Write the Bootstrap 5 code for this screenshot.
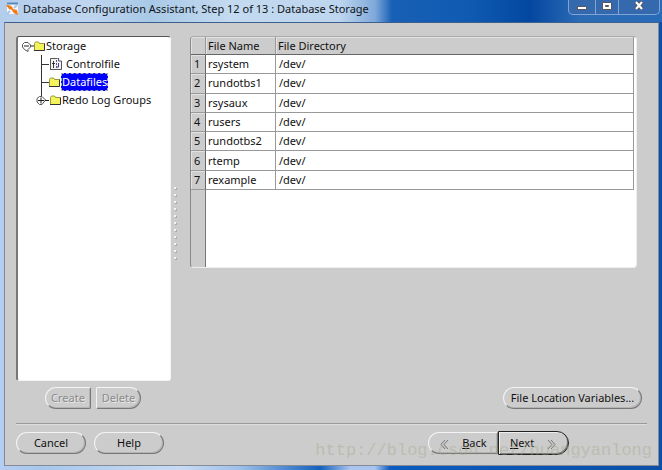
<!DOCTYPE html>
<html lang="en">
<head>
<meta charset="utf-8">
<meta name="viewport" content="width=device-width, initial-scale=1">
<title>Database Configuration Assistant</title>
<link href="https://cdn.jsdelivr.net/npm/bootstrap@5.3.0/dist/css/bootstrap.min.css" rel="stylesheet">
<style>
body{font:11px/14px "Noto Sans","Open Sans",sans-serif;color:#111;background:#1259ae}
.win{padding:0 3px 4px 4px;background:linear-gradient(90deg,#b5cdf2 0,#a6c8ec 40px,#c9dbf3 180px,#9dc0ea 240px,#1560bd 320px,#a9c4ee 350px,#a9c4ee 375px,#0b5cc0 390px,#0b4fa8 100%)}
.titlebar{height:22px;margin:0 -3px 0 -4px;padding-left:6px;background:linear-gradient(90deg,#b3cdec 0,#bfd5ef 90px,#a8c9e6 150px,#c3daf0 230px,#bdd5ee 340px,#7fa9da 375px,#1760b5 392px,#105ab2 470px,#0347a0 530px,#2c6bb5 580px,#286bb8 100%)}
.titlebar h1{font:11px/18px "Noto Sans","Open Sans",sans-serif;color:#101418;margin:0}
.capbtns{height:15px;border:1px solid #7fa5d6;border-top:0;border-radius:0 0 5px 5px;margin-right:2px;background:#3469ad}
.capbtns button{border:0;background:none;padding:0 0 4px;width:26px;line-height:0}
.capbtns button+button{border-left:1px solid #7fa5d6;width:23px}
.capbtns button:last-child{width:41px}
.client{background:#ccc;border:1px solid #848b96;border-top-color:#3d5f8d;padding:13px 11px 0}
.tree{width:155px;height:345px;background:#fff;border:1px solid #f4f4f4;border-top-color:#555;border-left:2px solid #777;border-radius:3px}
.tree ul{margin:0;padding:0}
.tree li{min-height:18px;position:relative}
.kids{padding-left:23px!important}
.kids::before{content:"";position:absolute;left:23px;top:0;height:46px;border-left:1px solid #333}
.kids li::before{content:"";width:8px;border-top:1px solid #333;flex:none}
.kids li.branch{margin-left:-5px}
.kids li.branch::before{display:none}
.picked{background:#00f;color:#fff;outline:1px dashed #aab;outline-offset:-1px;height:18px;line-height:17px;padding:0 1px}
.grip{width:19px;padding:151px 0 0 3px}
.grip i{display:block;width:2px;height:2px;background:#f4f4f4;box-shadow:1px 1px 0 #aaa;margin-bottom:5px}
.sheet{height:232px;border:1px solid #eee;border-top-color:#aaa;border-left-color:#888;border-radius:4px;margin-right:10px;background:linear-gradient(90deg,#ccc 14px,#777 14px,#777 15px,#fff 15px);overflow:hidden;padding-right:2px}
.grid{width:100%;height:153px;table-layout:fixed;border-collapse:separate;border-spacing:0}
.grid th,.grid td{border-right:1px solid #999;border-bottom:1px solid #999;padding:0 2px;font-weight:400;background:#fff;vertical-align:middle}
.grid th{background:#ccc;box-shadow:inset 1px 1px 0 #e2e2e2}
.grid thead th{border-bottom-color:#666;height:18px}
.grid tbody th{border-right-color:#666;padding-left:3px}
.grid td+td{padding-left:3px}
.pill{font:inherit;color:#111;background:#ccc;border:1px solid #f3f3f3;border-right-color:#777;border-bottom-color:#777;box-shadow:inset -1px -1px 0 #b4b4b4;border-radius:12px;height:22px;padding:0;width:70px;line-height:18px}
.pill:disabled{color:#8b8b8b;text-shadow:1px 1px 0 #e8e8e8;opacity:1}
.create,.delete{width:46px}
.delete{width:45px}
.create{border-radius:11px 2px 2px 11px}
.delete{border-radius:2px 11px 11px 2px}
.vars{width:139px}
.back{border-radius:12px 0 0 12px}
.next{width:71px;border:1px solid #222;border-radius:0 12px 12px 0;height:24px;box-shadow:inset 1px 1px 0 #eee,inset -1px -1px 0 #777}
.pairs{gap:5px;margin-left:29px}
.actions{padding:6px 5px 14px 0}
.foot{border-top:1px solid #999;box-shadow:inset 0 1px 0 #ddd;padding-top:8px}
.nav-pair{margin:-1px 78px 0 0}
.stamp{position:absolute;right:10px;bottom:9px;font:17px/20px "Liberation Mono",monospace;color:#a5a58a;opacity:.4;pointer-events:none}
</style>
<script src="https://cdn.jsdelivr.net/npm/bootstrap@5.3.0/dist/js/bootstrap.bundle.min.js"></script>
</head>
<body>
<svg width="0" height="0" class="position-absolute" aria-hidden="true">
<symbol id="folder" viewBox="0 0 13 11"><path d="M1.500 2.500 3 1h3l1 1h4.500v7.500h-10z" fill="#f3f35c"/><path d="M1.500 9V2.500L2.500 1h3l1 1.500h5" fill="none" stroke="#99983e"/><path d="M1 9.500h10.500v-7" fill="none" stroke="#333"/></symbol>
</svg>
<div class="win min-vh-100 d-flex flex-column position-relative">
<header class="titlebar d-flex justify-content-between align-items-start">
<div class="d-flex align-items-center gap-1">
<svg width="13" height="14" viewBox="0 0 13 14" aria-hidden="true"><path d="M1 2h11v10H1z" fill="#f5f8fc"/><path d="M0 3c5 0 6 1 7 4l4 1 1 5C9 12 7 11 6 8L3 7z" fill="#f07b17"/><path d="M11 3 8 6M4 9l-3 3" stroke="#aac5e3" stroke-width="2"/><path d="M1 1.500h11" stroke="#5688bd" stroke-width="2"/></svg>
<h1>Database Configuration Assistant, Step 12 of 13 : Database Storage</h1>
</div>
<div class="capbtns d-flex align-items-stretch">
<button type="button" aria-label="Minimize"><svg width="12" height="12"><path d="M1.500 6.500h9v3h-9z" fill="#fff" stroke="#5a5662"/></svg></button>
<button type="button" aria-label="Maximize"><svg width="12" height="12"><path d="M1.500 2.500h9v7h-9z" fill="#fff" stroke="#5a5662"/><path d="M4.500 5.500h3v1h-3z" fill="#3469ad" stroke="#5a5662"/></svg></button>
<button type="button" aria-label="Close"><svg width="12" height="12"><path d="m3 2 6 7M9 2 3 9" stroke="#5a5662" stroke-width="4"/><path d="m3 2 6 7M9 2 3 9" stroke="#fff" stroke-width="2"/></svg></button>
</div>
</header>
<main class="client flex-grow-1 d-flex flex-column">
<div class="d-flex">
<nav class="tree flex-shrink-0" aria-label="Storage">
<ul class="list-unstyled">
<li class="d-flex align-items-center ps-1"><svg width="12" height="11" viewBox="0 0 12 11"><path d="M2.500 1.500H6L8.500 4v2L6 8.500v2L2.500 8.500.500 6V3.500z" fill="#fff" stroke="#555"/><path d="M2 5h5M9 5h3" stroke="#222"/></svg><svg width="12" height="11" viewBox="1 0 12 11"><use href="#folder" width="13" height="11"/></svg>Storage</li>
<li class="kids"><ul class="list-unstyled">
<li class="d-flex align-items-center"><svg class="me-1" width="13" height="14" viewBox="0 0 13 14"><path d="M1 1h9l3 3v9H1z" fill="#f2f2f2"/><path d="M1.500 13V1.500h7M9.500 1v3h3v8.500h-11" fill="none" stroke="#555"/><path d="M4.500 4v7" stroke="#333"/><path d="M7.500 3v8" stroke="#55b" stroke-dasharray="2 1"/><path d="M9.500 6v4h-2" fill="none" stroke="#448"/><path d="M3 6.500h3" stroke="#333"/></svg>Controlfile</li>
<li class="d-flex align-items-center"><svg width="12" height="11" viewBox="1 0 12 11"><use href="#folder" width="13" height="11"/></svg><span class="picked">Datafiles</span></li>
<li class="branch d-flex align-items-center"><svg width="13" height="11" viewBox="0 0 13 11"><path d="M3.500 1.500H6L9.500 5 6 9.500H3.500L1 7V3.500z" fill="#fff" stroke="#555"/><path d="M2 5.500h6M5 2.500v6M9 5.500h4" stroke="#222"/></svg><svg width="13" height="11"><use href="#folder"/></svg>Redo Log Groups</li>
</ul></li>
</ul>
</nav>
<div class="grip flex-shrink-0" aria-hidden="true"><i></i><i></i><i></i><i></i><i></i><i></i><i></i><i></i><i></i><i></i><i></i></div>
<div class="sheet flex-grow-1">
<table class="grid">
<colgroup><col style="width:15px"><col style="width:70px"><col></colgroup>
<thead><tr><th></th><th scope="col">File Name</th><th scope="col">File Directory</th></tr></thead>
<tbody>
<tr><th scope="row">1</th><td>rsystem</td><td>/dev/</td></tr>
<tr><th scope="row">2</th><td>rundotbs1</td><td>/dev/</td></tr>
<tr><th scope="row">3</th><td>rsysaux</td><td>/dev/</td></tr>
<tr><th scope="row">4</th><td>rusers</td><td>/dev/</td></tr>
<tr><th scope="row">5</th><td>rundotbs2</td><td>/dev/</td></tr>
<tr><th scope="row">6</th><td>rtemp</td><td>/dev/</td></tr>
<tr><th scope="row">7</th><td>rexample</td><td>/dev/</td></tr>
</tbody>
</table>
</div>
</div>
<div class="actions d-flex justify-content-between">
<div class="pairs d-flex"><button class="pill create" type="button" disabled>Create</button><button class="pill delete" type="button" disabled>Delete</button></div>
<button class="pill vars" type="button">File Location Variables...</button>
</div>
<div class="foot d-flex justify-content-between align-items-start">
<div class="d-flex gap-2"><button class="pill" type="button">Cancel</button><button class="pill" type="button">Help</button></div>
<div class="nav-pair d-flex align-items-center"><button class="pill back" type="button"><svg class="me-2" width="12" height="11" viewBox="0 0 12 11"><path d="M6 1 2 5.500 6 10M9 1 5 5.500 9 10" fill="none" stroke="#777"/></svg> <u>B</u>ack</button><button class="pill next" type="button"><u>N</u>ext <svg class="ms-2" width="12" height="11" viewBox="0 0 12 11"><path d="m3 1 4 4.500L3 10M6 1l4 4.500L6 10" fill="none" stroke="#777"/></svg></button></div>
</div>
</main>
<div class="stamp">http://blog.csdn.net/huangyanlong</div>
</div>
</body>
</html>
